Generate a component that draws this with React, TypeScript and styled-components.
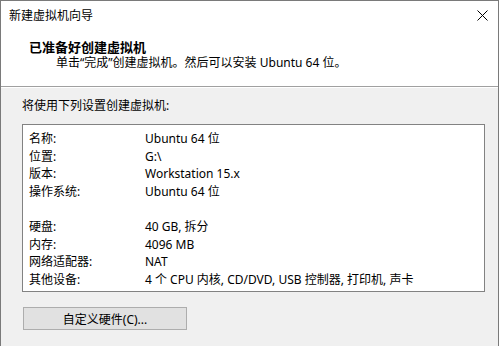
import styled, { createGlobalStyle } from "styled-components";

const GlobalStyle = createGlobalStyle`
  html, body {
    margin: 0;
    padding: 0;
    background: #f0f0f0;
  }
  body {
    font-family: "Noto Sans", "Noto Sans CJK SC", sans-serif;
    font-size: 12px;
    color: #000;
  }
`;

const settings: { label: string; value: string }[] = [
  { label: "名称:", value: "Ubuntu 64 位" },
  { label: "位置:", value: "G:\\" },
  { label: "版本:", value: "Workstation 15.x" },
  { label: "操作系统:", value: "Ubuntu 64 位" },
  { label: "", value: "" },
  { label: "硬盘:", value: "40 GB, 拆分" },
  { label: "内存:", value: "4096 MB" },
  { label: "网络适配器:", value: "NAT" },
  { label: "其他设备:", value: "4 个 CPU 内核, CD/DVD, USB 控制器, 打印机, 声卡" },
];

const App = (): JSX.Element => {
  return (
    <>
      <GlobalStyle />
      <Window>
        <TitleBar>
          <TitleText>新建虚拟机向导</TitleText>
          <CloseButton aria-label="关闭">
            <svg width="11" height="11" viewBox="0 0 11 11">
              <path d="M0.5 0.5 L10.5 10.5 M10.5 0.5 L0.5 10.5" stroke="#000" strokeWidth="1" fill="none" />
            </svg>
          </CloseButton>
        </TitleBar>
        <Header>
          <HeaderTitle>已准备好创建虚拟机</HeaderTitle>
          <HeaderSubtitle>单击“完成”创建虚拟机。然后可以安装 Ubuntu 64 位。</HeaderSubtitle>
        </Header>
        <Body>
          <Intro>将使用下列设置创建虚拟机:</Intro>
          <SummaryBox>
            {settings.map((row, index) => (
              <SummaryRow key={index}>
                <SummaryLabel>{row.label}</SummaryLabel>
                <SummaryValue>{row.value}</SummaryValue>
              </SummaryRow>
            ))}
          </SummaryBox>
          <CustomizeButton>自定义硬件(C)...</CustomizeButton>
        </Body>
      </Window>
    </>
  );
};

export default App;

const Window = styled.div`
  width: 499px;
  height: 346px;
  box-sizing: border-box;
  border: 1px solid #7a7a7a;
  border-bottom: none;
  background: #f0f0f0;
  display: flex;
  flex-direction: column;
  overflow: hidden;
`;

const TitleBar = styled.div`
  height: 29px;
  background: #fff;
  display: flex;
  align-items: center;
  justify-content: space-between;
  padding: 0 7px 0 8px;
`;

const TitleText = styled.span`
  line-height: 16px;
  padding-top: 1px;
`;

const CloseButton = styled.span`
  width: 11px;
  height: 11px;
  display: flex;
  margin-right: 3px;
`;

const Header = styled.div`
  background: #fff;
  height: 57px;
  box-sizing: border-box;
  padding: 9px 0 0 28px;
  border-bottom: 1px solid #a0a0a0;
  box-shadow: 0 1px 0 #fff;
`;

const HeaderTitle = styled.div`
  font-weight: bold;
  font-size: 13px;
  line-height: 16px;
`;

const HeaderSubtitle = styled.div`
  padding-left: 27px;
  line-height: 16px;
`;

const Body = styled.div`
  flex: 1;
  padding: 11px 13px 0 21px;
`;

const Intro = styled.div`
  line-height: 16px;
`;

const SummaryBox = styled.div`
  margin-top: 10px;
  height: 168px;
  box-sizing: border-box;
  background: #fff;
  border: 1px solid #828282;
  padding: 5px 6px 0 6px;
`;

const SummaryRow = styled.div`
  display: flex;
  height: 17.6px;
  line-height: 17.6px;
  white-space: nowrap;
`;

const SummaryLabel = styled.span`
  width: 116px;
  flex-shrink: 0;
`;

const SummaryValue = styled.span``;

const CustomizeButton = styled.button`
  margin-top: 15px;
  margin-left: 1px;
  width: 164px;
  height: 23px;
  background: #e1e1e1;
  border: 1px solid #adadad;
  font-family: inherit;
  font-size: 12px;
  color: #000;
  padding: 0;
`;
